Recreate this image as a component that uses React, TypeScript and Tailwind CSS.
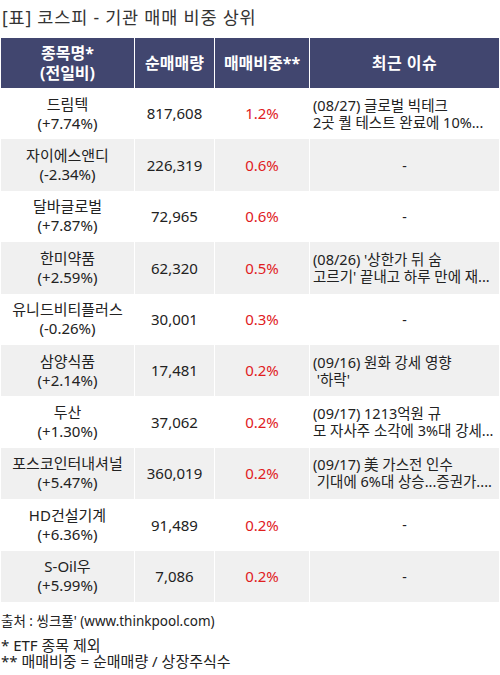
import React from "react";

type Row = { name: string; chg: string; qty: string; ratio: string; issue: string[] | null };

const rows: Row[] = [
  { name: "드림텍", chg: "(+7.74%)", qty: "817,608", ratio: "1.2%", issue: ["(08/27) 글로벌 빅테크", "2곳 퀄 테스트 완료에 10%..."] },
  { name: "자이에스앤디", chg: "(-2.34%)", qty: "226,319", ratio: "0.6%", issue: null },
  { name: "달바글로벌", chg: "(+7.87%)", qty: "72,965", ratio: "0.6%", issue: null },
  { name: "한미약품", chg: "(+2.59%)", qty: "62,320", ratio: "0.5%", issue: ["(08/26) '상한가 뒤 숨", "고르기' 끝내고 하루 만에 재..."] },
  { name: "유니드비티플러스", chg: "(-0.26%)", qty: "30,001", ratio: "0.3%", issue: null },
  { name: "삼양식품", chg: "(+2.14%)", qty: "17,481", ratio: "0.2%", issue: ["(09/16) 원화 강세 영향", " '하락'"] },
  { name: "두산", chg: "(+1.30%)", qty: "37,062", ratio: "0.2%", issue: ["(09/17) 1213억원 규", "모 자사주 소각에 3%대 강세..."] },
  { name: "포스코인터내셔널", chg: "(+5.47%)", qty: "360,019", ratio: "0.2%", issue: ["(09/17) 美 가스전 인수", " 기대에 6%대 상승...증권가...."] },
  { name: "HD건설기계", chg: "(+6.36%)", qty: "91,489", ratio: "0.2%", issue: null },
  { name: "S-Oil우", chg: "(+5.99%)", qty: "7,086", ratio: "0.2%", issue: null },
];

const font = { fontFamily: "'Noto Sans', 'Noto Sans CJK KR', sans-serif" };

export default function App() {
  return (
    <div className="w-[500px] h-[675px] bg-white text-[#222]" style={font}>
      <div className="h-[38px] pl-[2px] pt-[6px] text-[17.5px] leading-[22px] tracking-[0.8px] text-[#333]">
        [표] 코스피 - 기관 매매 비중 상위
      </div>
      <div className="ml-[1px] w-[498px]">
        <div className="flex h-[50px] bg-[#41466f] text-white font-bold text-[16px]">
          <div className="w-[134px] flex flex-col items-center justify-center leading-[20px] border-r border-white">
            <span>종목명*</span>
            <span>(전일비)</span>
          </div>
          <div className="w-[80px] flex items-center justify-center border-r border-white">순매매량</div>
          <div className="w-[95px] flex items-center justify-center border-r border-white">매매비중**</div>
          <div className="flex-1 flex items-center justify-center tracking-[0.5px]">최근 이슈</div>
        </div>
        {rows.map((r, i) => (
          <div
            key={i}
            className={`flex h-[51.4px] ${i % 2 === 1 ? "bg-[#f0f0f0]" : "bg-white"}`}
          >
            <div className="w-[134px] flex flex-col items-center justify-center text-[15px] leading-[19px] border-r border-white">
              <span>{r.name}</span>
              <span>{r.chg}</span>
            </div>
            <div className="w-[80px] flex items-center justify-center text-[15px] border-r border-white">{r.qty}</div>
            <div className="w-[95px] flex items-center justify-center text-[15px] text-[#e0201e] border-r border-white">{r.ratio}</div>
            <div className="flex-1 overflow-hidden">
              {r.issue ? (
                <div className="h-full flex flex-col justify-center pl-[3px] leading-[17px] text-[14.5px] whitespace-pre">
                  <span>{r.issue[0]}</span>
                  <span>{r.issue[1]}</span>
                </div>
              ) : (
                <div className="h-full flex items-center justify-center text-[14px]">-</div>
              )}
            </div>
          </div>
        ))}
      </div>
      <div className="pl-[1px] pt-[10px] text-[13.5px] leading-[18px] text-[#222]">출처 : 씽크풀' (www.thinkpool.com)</div>
      <div className="pl-[1px] pt-[7px] text-[15px] leading-[16px] text-[#222]">
        <div>* ETF 종목 제외</div>
        <div>** 매매비중 = 순매매량 / 상장주식수</div>
      </div>
    </div>
  );
}
